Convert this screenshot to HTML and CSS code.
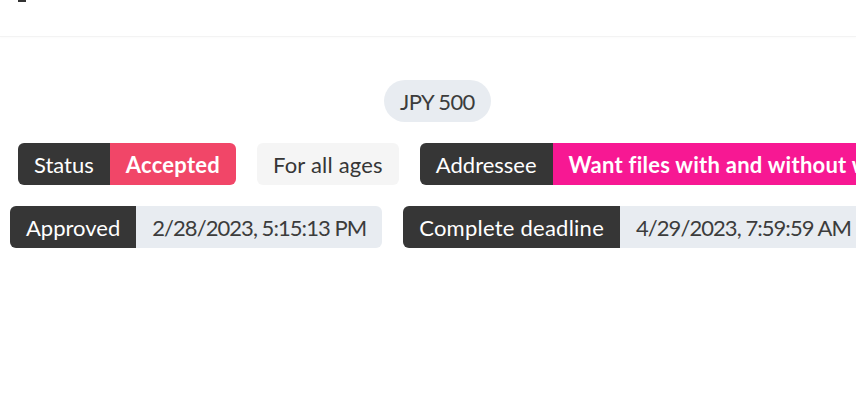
FILE: index.html
```html
<!DOCTYPE html>
<html lang="en">
<head>
<meta charset="utf-8">
<link rel="stylesheet" href="styles.css">
</head>
<body>
<header class="topbar">
  <span class="topbar-icon"></span>
</header>
<main class="content">
  <div class="row row-center">
    <span class="tag tag-pill">JPY 500</span>
  </div>
  <div class="row row-one">
    <span class="tags">
      <span class="tag tag-dark">Status</span><span class="tag tag-danger tag-bold">Accepted</span>
    </span>
    <span class="tag tag-light">For all ages</span>
    <span class="tags">
      <span class="tag tag-dark">Addressee</span><span class="tag tag-pink tag-bold">Want files with and without watermark</span>
    </span>
  </div>
  <div class="row row-two">
    <span class="tags">
      <span class="tag tag-dark">Approved</span><span class="tag tag-grey tag-num">2/28/2023, 5:15:13 PM</span>
    </span>
    <span class="tags">
      <span class="tag tag-dark tag-wide">Complete deadline</span><span class="tag tag-grey tag-num">4/29/2023, 7:59:59 AM</span>
    </span>
  </div>
</main>
</body>
</html>
```

FILE: styles.css
```css
html, body {
  margin: 0;
  padding: 0;
  background: #ffffff;
  overflow: hidden;
}
body {
  font-family: "Lato", "Liberation Sans", sans-serif;
  color: #4a4a4a;
  width: 856px;
  height: 406px;
}
.topbar {
  height: 36px;
  border-bottom: 1px solid #f3f3f3;
  box-shadow: 0 1px 2px rgba(0, 0, 0, 0.02);
  position: relative;
}
.topbar-icon {
  position: absolute;
  left: 18px;
  top: 0;
  width: 8px;
  height: 2px;
  background: #333333;
}
.content {
  padding-top: 43px;
  display: flex;
  flex-direction: column;
  gap: 21px;
}
.row {
  display: flex;
  gap: 21px;
  white-space: nowrap;
}
.row-center {
  padding-left: 384px;
}
.row-one {
  padding-left: 18px;
}
.row-two {
  padding-left: 10px;
}
.tags {
  display: inline-flex;
  border-radius: 6px;
  overflow: hidden;
  flex-shrink: 0;
}
.tag {
  display: inline-flex;
  align-items: center;
  height: 42px;
  padding: 0 16px;
  font-size: 22px;
  box-sizing: border-box;
  border-radius: 6px;
  flex-shrink: 0;
}
.tags .tag {
  border-radius: 0;
}
.tag-pill {
  border-radius: 21px;
  background: #e8ecf1;
  color: #3c3c3c;
  letter-spacing: -0.6px;
}
.tag-dark {
  background: #363636;
  color: #ffffff;
}
.tag-wide {
  letter-spacing: 0.24px;
}
.tag-danger {
  background: #f14668;
  color: #ffffff;
}
.tag-pink {
  background: #f71893;
  color: #ffffff;
}
.tag-bold {
  font-weight: 700;
  letter-spacing: 0.25px;
}
.tag-light {
  background: #f5f5f5;
  color: #363636;
  letter-spacing: 0.2px;
}
.tag-grey {
  background: #e8ecf1;
  color: #3c3c3c;
}
.tag-num {
  letter-spacing: -0.95px;
}
```
